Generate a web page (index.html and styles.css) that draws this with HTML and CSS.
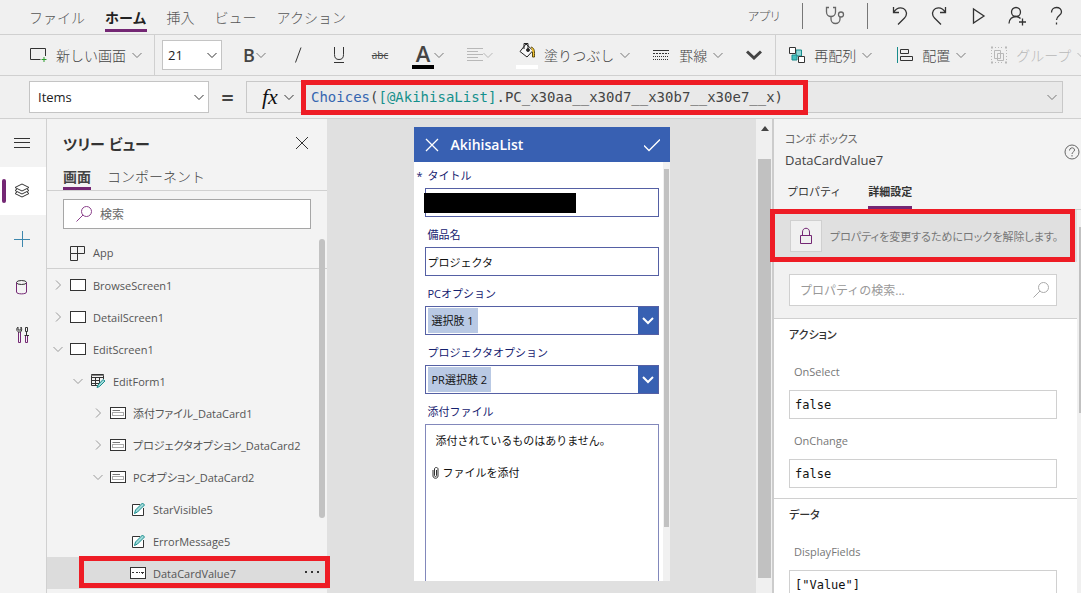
FILE: index.html
```html
<!DOCTYPE html>
<html lang="ja">
<head>
    <meta charset="UTF-8">
    <meta name="viewport" content="width=device-width, initial-scale=1.0">
    <title>Power Apps Studio</title>
    <link rel="stylesheet" href="styles.css">
</head>
<body>
    <!-- shared icons -->
    <svg class="sprite" aria-hidden="true">
        <symbol id="chev-down" viewBox="0 0 10 10"><path d="M.5 3 5 7.500 9.500 3"/></symbol>
        <symbol id="chev-right" viewBox="0 0 10 10"><path d="M3 .5 7.500 5 3 9.500"/></symbol>
        <symbol id="close" viewBox="0 0 14 14"><path d="M1 1 13 13M13 1 1 13"/></symbol>
        <symbol id="search" viewBox="0 0 16 16"><circle cx="10.500" cy="5.500" r="5"/><path d="M7 9 .5 15.500"/></symbol>
        <symbol id="screen" viewBox="0 0 16 12"><rect x=".5" y=".5" width="15" height="11" fill="#fff"/></symbol>
        <symbol id="card" viewBox="0 0 16 12"><rect x=".5" y=".5" width="15" height="11" fill="#fff"/><path d="M2.500 3.500H10" stroke="#777"/><rect x="2.500" y="5.500" width="11" height="3" stroke="#aaa"/></symbol>
        <symbol id="label-edit" viewBox="0 0 16 14"><path d="M13.500 6V13.500H2.500V2.500H10" fill="#fff"/><path d="M4.500 11.500 5.500 8 12.500 1 14.500 3 7.500 10Z" fill="#9fdada" stroke="#188c8c"/></symbol>
    </svg>

    <header>
        <div class="menu-bar">
            <nav class="menu">
                <a href="#">ファイル</a>
                <a href="#" class="active">ホーム</a>
                <a href="#">挿入</a>
                <a href="#">ビュー</a>
                <a href="#">アクション</a>
            </nav>
            <div class="app-actions">
                <a href="#" class="app-link">アプリ</a>
                <span class="divider"></span>
                <button aria-label="アプリ チェック"><svg class="icon-20 soft" viewBox="0 0 20 20"><path d="M4 1.500H1.500V6a4.500 4.500 0 0 0 9 0V1.500H8M6 10.500V13a4.500 4.500 0 0 0 9 0V11"/><circle cx="16" cy="8.500" r="2.500"/></svg></button>
                <span class="divider"></span>
                <button aria-label="元に戻す"><svg class="icon-20" viewBox="0 0 20 20"><path d="M3.500 1V6.500H9M3.500 6.500C7 1 11 1.500 13.500 2.500 17 4.500 17.500 9 14.500 12L8 18.500"/></svg></button>
                <button aria-label="やり直し"><svg class="icon-20" viewBox="0 0 20 20"><path d="M16.500 1V6.500H11M16.500 6.500C13 1 9 1.500 6.500 2.500 3 4.500 2.500 9 5.500 12L12 18.500"/></svg></button>
                <button aria-label="プレビュー"><svg class="icon-20" viewBox="0 0 20 20"><path d="M5.500 3V17L16 10Z"/></svg></button>
                <button aria-label="共有"><svg class="icon-20" viewBox="0 0 20 20"><circle cx="9" cy="6" r="4.500"/><path d="M2 17.500C2 13 5.500 10.500 9 10.500 11 10.500 12.500 11.500 13.500 12.500M12 16H19M15.500 12.500V19.500"/></svg></button>
                <button aria-label="ヘルプ"><svg class="icon-20" viewBox="0 0 20 20"><path d="M5.500 6.500C5.500 3.500 7.500 1.500 10.500 1.500S15.500 3.500 15.500 6C15.500 9.500 10.500 9.500 10.500 14M10.500 16.500V18.500"/></svg></button>
            </div>
        </div>

        <div class="ribbon">
            <button class="new-screen">
                <svg class="icon-18" viewBox="0 0 18 18"><path d="M10.500 13.500H.5V2.500H15.500V10"/><path d="M14 11V16M11.500 13.500H16.500" stroke="#2a9d2a"/></svg>
                <span>新しい画面</span>
                <svg class="chev"><use href="#chev-down"/></svg>
            </button>
            <span class="select size-select">
                <select aria-label="フォント サイズ"><option>21</option></select>
                <svg class="chev dark"><use href="#chev-down"/></svg>
            </span>
            <div class="formatting">
                <button aria-label="太字"><span class="bold-glyph">B</span><svg class="chev"><use href="#chev-down"/></svg></button>
                <button class="glyph" aria-label="斜体"><svg class="icon-18" viewBox="0 0 18 18"><path d="M12 1.500 6.500 16.500"/></svg></button>
                <button class="glyph" aria-label="下線"><svg class="icon-18" viewBox="0 0 18 18"><path d="M4.500 1V8.500C4.500 12 6 13.500 9 13.500S13.500 12 13.500 8.500V1M4 16.500H14"/></svg></button>
                <button class="glyph strike">abc</button>
                <button class="color-button" aria-label="フォントの色"><span class="font-color">A</span><svg class="chev"><use href="#chev-down"/></svg></button>
                <button class="disabled" aria-label="テキストの整列"><svg class="icon-16" viewBox="0 0 16 16"><path d="M0 1.500H16M0 4.500H11M0 7.500H16M0 10.500H11M0 13.500H16"/></svg><svg class="chev"><use href="#chev-down"/></svg></button>
                <button class="fill-button">
                    <span class="fill-color"><svg class="icon-18" viewBox="0 0 18 18"><path d="M8 2 15 8.500 9 15 2 9.500ZM6 7V1.500H10V8" fill="#f8f8f8" stroke="#222"/><path d="M13 5C17 6 16.500 10 16.500 15H14.500V10" fill="#f4c430" stroke="#5a4a10"/><circle cx="10" cy="8" r="1.500" fill="#222"/></svg></span>
                    <span>塗りつぶし</span>
                    <svg class="chev"><use href="#chev-down"/></svg>
                </button>
                <button class="border-button">
                    <svg class="icon-16" viewBox="0 0 16 16"><path d="M0 3.500H16"/><path d="M0 6.500H16" stroke-dasharray="2 1"/><path d="M0 9.500H16M0 12.500H16" stroke-dasharray="1 1"/></svg>
                    <span>罫線</span>
                    <svg class="chev"><use href="#chev-down"/></svg>
                </button>
                <button aria-label="その他"><svg class="more" viewBox="0 0 16 10"><path d="M1 1.500 8 8 15 1.500"/></svg></button>
            </div>
            <div class="arrange">
                <button>
                    <svg class="icon-18" viewBox="0 0 18 18"><path d="M8 4H13.500V10H8Z" fill="#8ed8d8" stroke="#188c8c"/><path d="M4 9H9V14H4Z" fill="#43c0c0" stroke="#188c8c"/><path d="M1.500 1.500H7.500V7.500H1.500ZM10.500 10.500H16.500V16.500H10.500Z" fill="#fff"/></svg>
                    <span>再配列</span>
                    <svg class="chev"><use href="#chev-down"/></svg>
                </button>
                <button>
                    <svg class="icon-18" viewBox="0 0 18 18"><path d="M1.500 1V17" stroke="#188c8c"/><path d="M4.500 3.500H12.500V7.500H4.500ZM4.500 10.500H16.500V14.500H4.500Z"/></svg>
                    <span>配置</span>
                    <svg class="chev"><use href="#chev-down"/></svg>
                </button>
                <button class="disabled">
                    <svg class="icon-18" viewBox="0 0 18 18"><path d="M4.500 4.500H10.500V12.500H4.500ZM7.500 7.500H13.500V14.500H7.500Z"/><path d="M1 1.500H3M15 1.500H17M1 16.500H3M15 16.500H17" stroke-width="2"/><path d="M1.500 4V14M16.500 4V14M5 1.500H13M5 16.500H13" stroke-dasharray="1 2"/></svg>
                    <span>グループ</span>
                    <svg class="chev"><use href="#chev-down"/></svg>
                </button>
            </div>
        </div>

        <div class="formula-bar">
            <span class="select property-select">
                <select aria-label="プロパティ"><option>Items</option></select>
                <svg class="chev dark"><use href="#chev-down"/></svg>
            </span>
            <span class="equals">=</span>
            <div class="formula">
                <button class="fx"><span>fx</span><svg class="chev dark"><use href="#chev-down"/></svg></button>
                <div class="formula-input">
                    <code role="textbox" aria-label="数式" contenteditable="true" spellcheck="false"><span class="fn">Choices</span>(<span class="ref">[@AkihisaList]</span>.PC_x30aa__x30d7__x30b7__x30e7__x)</code>
                    <button aria-label="数式バーを展開"><svg class="chev"><use href="#chev-down"/></svg></button>
                    <span class="marker marker-formula"></span>
                </div>
            </div>
        </div>
    </header>

    <main>
        <nav class="rail">
            <button aria-label="メニュー"><svg class="icon-18" viewBox="0 0 18 18"><path d="M1 4.500H17M1 8.500H17M1 13.500H17"/></svg></button>
            <button class="active" aria-label="ツリー ビュー"><svg class="icon-18" viewBox="0 0 18 18"><path d="M9 2 16 5.500 9 9 2 5.500ZM4 7 2 8.500 9 12 16 8.500 14 7M4 10 2 11.500 9 15 16 11.500 14 10"/></svg></button>
            <button class="insert" aria-label="挿入"><svg class="icon-18" viewBox="0 0 18 18"><path d="M9.500 1V17M1 9.500H17"/></svg></button>
            <button aria-label="データ"><svg class="icon-18" viewBox="0 0 18 18"><ellipse cx="8.500" cy="4.500" rx="5" ry="2"/><path d="M3.500 4.500V14C3.500 16.500 13.500 16.500 13.500 14V4.500" stroke="#742774"/></svg></button>
            <button aria-label="高度なツール"><svg class="icon-18" viewBox="0 0 18 18"><path d="M5.500 6V16.500H7.500V6M12.500 10V16.500H14.500V10" stroke="#742774"/><path d="M5 1C3 2.500 3.500 5 5.500 6H7.500C9 5 9 2.500 8 1V4H5ZM12.500 1.500H14.500V5.500H12.500ZM13.500 6V9M11.500 9.500H16"/></svg></button>
        </nav>

        <aside class="tree">
            <div class="tree-title">
                <h2>ツリー ビュー</h2>
                <button aria-label="閉じる"><svg class="icon-14"><use href="#close"/></svg></button>
            </div>
            <div class="tree-tabs">
                <a href="#" class="active">画面</a>
                <a href="#">コンポーネント</a>
            </div>
            <label class="tree-search">
                <svg class="icon-16"><use href="#search"/></svg>
                <input type="text" placeholder="検索" aria-label="検索">
            </label>
            <ul class="tree-list">
                <li class="app"><svg class="icon-16" viewBox="0 0 16 16"><path d="M.5 1.500H14.500V8.500H.5ZM.5 8.500V15.500H7.500V1.500"/></svg>App</li>
                <li><svg class="chev"><use href="#chev-right"/></svg><svg class="type"><use href="#screen"/></svg>BrowseScreen1</li>
                <li><svg class="chev"><use href="#chev-right"/></svg><svg class="type"><use href="#screen"/></svg>DetailScreen1</li>
                <li><svg class="chev"><use href="#chev-down"/></svg><svg class="type"><use href="#screen"/></svg>EditScreen1</li>
                <li class="level-1"><svg class="chev"><use href="#chev-down"/></svg><svg class="icon-16" viewBox="0 0 16 16"><path d="M9 12.500H1.500V1.500H13.500V6M1.500 4.500H13.500M1.500 7.500H10M1.500 10.500H9M5.500 4V12M9.500 4V10"/><path d="M1.500 2.500H13.500" stroke="#888"/><path d="M7 14.500 8 12 13 6.500 15 8 9.500 13.500Z" fill="#9fdada" stroke="#188c8c"/></svg>EditForm1</li>
                <li class="level-2"><svg class="chev"><use href="#chev-right"/></svg><svg class="type"><use href="#card"/></svg>添付ファイル_DataCard1</li>
                <li class="level-2"><svg class="chev"><use href="#chev-right"/></svg><svg class="type"><use href="#card"/></svg>プロジェクタオプション_DataCard2</li>
                <li class="level-2"><svg class="chev"><use href="#chev-down"/></svg><svg class="type"><use href="#card"/></svg>PCオプション_DataCard2</li>
                <li class="level-3"><svg class="edit"><use href="#label-edit"/></svg>StarVisible5</li>
                <li class="level-3"><svg class="edit"><use href="#label-edit"/></svg>ErrorMessage5</li>
                <li class="level-3 selected"><svg class="type" viewBox="0 0 16 12"><rect x=".5" y=".5" width="15" height="11" fill="#fff"/><path d="M2 5.500H4M6 5.500H8M9 5.500H10M11 5.500H14M12.500 5V7"/></svg>DataCardValue7<button aria-label="その他の操作"><svg class="icon-16" viewBox="0 0 16 16"><path d="M1 7H3M7 7H9M13 7H15" stroke-width="2"/></svg></button><span class="marker marker-tree"></span></li>
            </ul>
            <span class="tree-scroll"></span>
        </aside>

        <section class="canvas">
            <form class="phone">
                <div class="phone-header">
                    <button type="button" aria-label="キャンセル"><svg class="icon-14"><use href="#close"/></svg></button>
                    <h1>AkihisaList</h1>
                    <button type="button" aria-label="保存"><svg class="icon-16" viewBox="0 0 16 16"><path d="M0 8.500 5 13.500 16 2.500"/></svg></button>
                </div>
                <div class="phone-body">
                    <div class="phone-fields">
                        <label class="required" for="title">タイトル</label>
                        <div class="field"><input id="title" type="text"><span class="redacted"></span></div>
                        <label for="item-name">備品名</label>
                        <div class="field"><input id="item-name" type="text" value="プロジェクタ"></div>
                        <label for="pc-option">PCオプション</label>
                        <div class="field combo"><span class="tag">選択肢 1</span><button id="pc-option" type="button"><svg class="combo-chev" viewBox="0 0 12 8"><path d="M1 1 6 6 11 1"/></svg></button></div>
                        <label for="pr-option">プロジェクタオプション</label>
                        <div class="field combo"><span class="tag">PR選択肢 2</span><button id="pr-option" type="button"><svg class="combo-chev" viewBox="0 0 12 8"><path d="M1 1 6 6 11 1"/></svg></button></div>
                        <label for="attach">添付ファイル</label>
                        <div class="attachments">
                            <p>添付されているものはありません。</p>
                            <button id="attach" type="button"><svg class="clip" viewBox="0 0 7 12"><path d="M1 3V9C1 12 6 12 6 9V2C6 0 2.500 0 2.500 2V8.500C2.500 10 4.500 10 4.500 8.500V3"/></svg>ファイルを添付</button>
                        </div>
                    </div>
                    <div class="phone-scroll"><span></span></div>
                </div>
            </form>
            <div class="canvas-scroll"><i></i><span></span></div>
        </section>

        <aside class="properties">
            <div class="prop-header">
                <div>
                    <p class="control-type">コンボ ボックス</p>
                    <p class="control-name">DataCardValue7</p>
                </div>
                <button aria-label="ヘルプ"><svg class="icon-16" viewBox="0 0 16 16"><circle cx="8" cy="8" r="7"/><path d="M5.500 6.500C5.500 3 10.500 3 10.500 6 10.500 8 8 8 8 10M8 11V12.500"/></svg></button>
            </div>
            <div class="prop-tabs">
                <a href="#">プロパティ</a>
                <a href="#" class="active">詳細設定</a>
            </div>
            <div class="prop-body">
                <div class="prop-content">
                    <div class="lock-row">
                        <button aria-label="ロックを解除"><svg class="icon-18" viewBox="0 0 18 18"><path d="M3.500 8.500H14.500V16.500H3.500ZM5.500 8.500V5C5.500 0 12.500 0 12.500 5V8.500"/></svg></button>
                        <span>プロパティを変更するためにロックを解除します。</span>
                        <span class="marker marker-lock"></span>
                    </div>
                    <div class="prop-search-row">
                        <label class="prop-search">
                            <input type="text" placeholder="プロパティの検索..." aria-label="プロパティの検索">
                            <svg class="icon-16"><use href="#search"/></svg>
                        </label>
                    </div>
                    <section class="prop-group">
                        <h3>アクション</h3>
                        <label for="on-select">OnSelect</label>
                        <input id="on-select" type="text" value="false">
                        <label for="on-change">OnChange</label>
                        <input id="on-change" type="text" value="false">
                    </section>
                    <section class="prop-group">
                        <h3>データ</h3>
                        <label for="display-fields">DisplayFields</label>
                        <input id="display-fields" type="text" value='["Value"]'>
                    </section>
                </div>
                <div class="prop-scroll"><span></span></div>
            </div>
        </aside>
    </main>
</body>
</html>
```

FILE: styles.css
```css
* {
    box-sizing: border-box;
}
body {
    margin: 0;
    height: 100vh;
    display: flex;
    flex-direction: column;
    overflow: hidden;
    background-color: #f0f0f0;
    color: #444;
    font-family: "Open Sans", "Noto Sans CJK JP", sans-serif;
    font-size: 14px;
}
h1, h2, h3, p, ul {
    margin: 0;
    padding: 0;
}
a {
    color: inherit;
    text-decoration: none;
}
button, input, select {
    font: inherit;
    color: inherit;
    padding: 0;
    margin: 0;
    border: none;
    background: none;
    outline: none;
}
button {
    display: flex;
    align-items: center;
    flex-shrink: 0;
    white-space: nowrap;
}
svg {
    display: block;
    flex-shrink: 0;
    fill: none;
    stroke: #333;
}
.sprite {
    position: absolute;
    width: 0;
    height: 0;
}
.icon-14 { width: 14px; height: 14px; }
.icon-16 { width: 16px; height: 16px; }
.icon-18 { width: 18px; height: 18px; }
.icon-20 { width: 20px; height: 20px; stroke-width: 1.3; }
.soft { stroke: #666; }
.chev {
    width: 10px;
    height: 10px;
    stroke: #777;
}
.chev.dark { stroke: #333; }
.disabled { color: #b8b8b8; }
.disabled svg { stroke: #b8b8b8; }

/* red frames drawn over the page */
.marker {
    position: absolute;
    border: 5px solid #ee1c25;
    pointer-events: none;
    z-index: 5;
}

/* menu */
header {
    flex-shrink: 0;
    border-bottom: 1px solid #d0d0d0;
}
.menu-bar {
    display: flex;
    justify-content: space-between;
    height: 35px;
    padding: 0 15px 0 29px;
    border-bottom: 1px solid #d0d0d0;
}
.menu {
    display: flex;
    align-items: flex-start;
    gap: 20px;
    color: #555;
    font-weight: 300;
}
.menu a {
    height: 32px;
    line-height: 36px;
    border-bottom: 3px solid transparent;
}
.menu a.active {
    color: #222;
    font-weight: bold;
    border-color: #742774;
}
.app-actions {
    display: flex;
    align-items: center;
    gap: 19px;
    height: 32px;
}
.app-link {
    color: #555;
    font-size: 12px;
    font-weight: 300;
    font-feature-settings: "palt";
}
.divider {
    width: 1px;
    height: 26px;
    margin: 0 3px;
    background-color: #777;
}

/* ribbon */
.ribbon {
    display: flex;
    align-items: center;
    height: 41px;
    border-bottom: 1px solid #d0d0d0;
    overflow: hidden;
    font-weight: 300;
}
.new-screen {
    height: 100%;
    gap: 6px;
    padding: 0 12px 0 30px;
    border-right: 1px solid #d0d0d0;
}
.new-screen span { padding-left: 2px; }
.select {
    display: grid;
    align-items: center;
    background-color: #fff;
    border: 1px solid #c4c4c4;
    font-size: 13px;
    font-weight: 400;
}
.select select, .select svg { grid-area: 1 / 1; }
.select select {
    width: 100%;
    height: 100%;
    padding-left: 5px;
    appearance: none;
    color: #222;
}
.select svg {
    justify-self: end;
    margin-right: 4px;
    pointer-events: none;
}
.size-select {
    width: 60px;
    height: 30px;
    margin: 0 20px 0 7px;
    flex-shrink: 0;
}
.formatting {
    display: flex;
    align-items: center;
    gap: 23px;
    height: 100%;
    padding-right: 13px;
    border-right: 1px solid #d0d0d0;
}
.bold-glyph {
    width: 14px;
    font-size: 18px;
    font-weight: 600;
}
.glyph {
    width: 18px;
    justify-content: center;
}
.strike {
    font-size: 10px;
    font-weight: 400;
    text-decoration: line-through;
}
.font-color, .fill-color {
    display: flex;
    justify-content: center;
    width: 22px;
    height: 27px;
    border-bottom: 4px solid #000;
    font-size: 22px;
    font-weight: 600;
    line-height: 22px;
}
.fill-color { border-color: #fff; }
.fill-button span + span { padding-left: 6px; }
.fill-button .chev { margin-left: 6px; }
.border-button span { padding: 0 6px 0 10px; }
.more {
    width: 16px;
    height: 10px;
    stroke: #444;
    stroke-width: 3;
}
.arrange {
    display: flex;
    gap: 24px;
    padding-left: 12px;
}
.arrange button { gap: 6px; }
.arrange span { padding-left: 2px; }

/* formula bar */
.formula-bar {
    display: flex;
    align-items: center;
    height: 42px;
    padding: 0 18px 0 29px;
}
.property-select {
    width: 180px;
    height: 32px;
    flex-shrink: 0;
}
.property-select select { padding-left: 8px; }
.equals {
    width: 37px;
    text-align: center;
    font-size: 22px;
    font-weight: 600;
}
.formula {
    display: flex;
    flex: 1;
    height: 32px;
    border: 1px solid #c8c8c8;
}
.fx {
    gap: 6px;
    width: 56px;
    padding-left: 15px;
    color: #111;
    font-family: "Liberation Serif", serif;
    font-size: 22px;
    font-style: italic;
}
.formula-input {
    position: relative;
    display: flex;
    flex: 1;
    align-items: center;
    justify-content: space-between;
    padding: 0 5px 0 8px;
    background-color: #e9e9e9;
}
.formula-input code {
    outline: none;
    font-family: "DejaVu Sans Mono", monospace;
    font-size: 14px;
    white-space: nowrap;
}
.fn { color: #3465b0; }
.ref { color: #15908c; }
.marker-formula {
    left: -2px;
    top: -2px;
    width: 507px;
    height: 35px;
}

/* work area */
main {
    display: flex;
    flex: 1;
    min-height: 0;
}
.rail {
    width: 47px;
    flex-shrink: 0;
    background-color: #f3f3f3;
    border-right: 1px solid #d0d0d0;
}
.rail button {
    width: 100%;
    height: 48px;
    padding-left: 13px;
}
.rail .active {
    position: relative;
    background-color: #fff;
}
.rail .active::before {
    content: "";
    position: absolute;
    left: 2px;
    top: 12px;
    width: 4px;
    height: 24px;
    border-radius: 2px;
    background-color: #742774;
}
.rail .insert svg { stroke: #3d87ad; }

/* tree view */
.tree {
    position: relative;
    width: 280px;
    flex-shrink: 0;
    background-color: #f3f3f3;
}
.tree-title {
    display: flex;
    align-items: center;
    justify-content: space-between;
    height: 48px;
    padding: 0 18px 0 16px;
    color: #333;
}
.tree-title h2 {
    font-size: 15px;
    font-weight: 600;
    font-feature-settings: "palt";
}
.tree-tabs {
    display: flex;
    gap: 16px;
    height: 24px;
    padding-left: 16px;
    border-bottom: 1px solid #d0d0d0;
    line-height: 20px;
}
.tree-tabs a { font-weight: 300; }
.tree-tabs a.active {
    font-weight: bold;
    border-bottom: 3px solid #742774;
}
.tree-search {
    display: flex;
    align-items: center;
    gap: 8px;
    height: 30px;
    margin: 8px 16px 8px;
    padding: 0 12px;
    background-color: #fff;
    border: 1px solid #a6a6a6;
    font-size: 12px;
}
.tree-search svg { stroke: #8a3f8a; }
.tree-search input {
    flex: 1;
    min-width: 0;
}
.tree-search input::placeholder {
    color: #666;
    opacity: 1;
}
.tree-list {
    list-style: none;
    font-size: 11px;
    color: #555;
    font-feature-settings: "palt";
}
.tree-list li {
    display: flex;
    align-items: center;
    height: 32px;
    padding-left: 6px;
    gap: 7px;
    white-space: nowrap;
}
.tree-list li.app {
    padding-left: 23px;
    border-bottom: 1px solid #d0d0d0;
}
.type {
    width: 16px;
    height: 12px;
}
.edit {
    width: 16px;
    height: 14px;
}
.tree-list .chev { stroke: #999; }
.tree-list .level-1 { padding-left: 26px; }
.tree-list .level-2 { padding-left: 46px; }
.tree-list .level-3 { padding-left: 83px; }
.tree-list .selected {
    position: relative;
    padding-right: 7px;
    background-color: #dcdcdc;
}
.tree-list .selected button { margin-left: auto; }
.marker-tree {
    left: 32px;
    right: -3px;
    top: -1px;
    bottom: 1px;
}
.tree-scroll {
    position: absolute;
    top: 120px;
    right: 2px;
    width: 6px;
    height: 279px;
    border-radius: 3px;
    background-color: #c2c2c2;
}

/* canvas */
.canvas {
    display: flex;
    flex: 1;
    min-width: 0;
    justify-content: space-between;
    background-color: #e0e0e0;
}
.phone {
    display: flex;
    flex-direction: column;
    width: 256px;
    margin: 8px auto 12px;
    background-color: #fff;
    font-size: 11px;
}
.phone-header {
    display: flex;
    align-items: center;
    gap: 12px;
    height: 35px;
    padding: 0 10px 0 11px;
    background-color: #3860b2;
    color: #fff;
}
.phone-header svg {
    stroke: #fff;
    stroke-width: 1.3;
}
.phone-header h1 {
    flex: 1;
    font-size: 14px;
    font-weight: 600;
}
.phone-body {
    display: flex;
    flex: 1;
    min-height: 0;
}
.phone-fields {
    display: flex;
    flex-direction: column;
    flex: 1;
    min-width: 0;
    padding: 2px 4px 0 11px;
}
.phone-fields label {
    position: relative;
    height: 24px;
    padding-left: 3px;
    line-height: 24px;
    color: #15216f;
}
.required::before {
    content: "*";
    position: absolute;
    left: -8px;
}
.field {
    position: relative;
    display: flex;
    height: 29px;
    margin-bottom: 6px;
    border: 1px solid #5560a4;
    color: #111;
}
.field input {
    width: 100%;
    padding-left: 2px;
}
.redacted {
    position: absolute;
    left: -2px;
    top: 4px;
    width: 152px;
    height: 20px;
    background-color: #000;
}
.combo { justify-content: space-between; }
.tag {
    margin: 1px 2px;
    padding: 0 4px;
    line-height: 25px;
    background-color: #b9c9e4;
}
.combo button {
    justify-content: center;
    width: 20px;
    background-color: #3860b2;
}
.combo-chev {
    width: 12px;
    height: 8px;
    stroke: #fff;
    stroke-width: 2;
}
.attachments {
    flex: 1;
    padding: 8px 10px;
    border: 1px solid #8288bb;
    border-bottom: none;
    color: #111;
}
.attachments p, .attachments button { line-height: 16px; }
.attachments button {
    gap: 4px;
    margin-top: 16px;
    margin-left: -4px;
}
.clip {
    width: 7px;
    height: 12px;
}
.phone-scroll {
    width: 7px;
    padding: 7px 1px 54px;
    background-color: #f1f1f1;
}
.phone-scroll span {
    display: block;
    height: 100%;
    background-color: #c1c1c1;
}
.canvas-scroll {
    display: flex;
    flex-direction: column;
    align-items: center;
    gap: 28px;
    width: 16px;
    flex-shrink: 0;
    padding: 7px 1px 15px 2px;
    background-color: #f0f0f0;
}
.canvas-scroll i {
    border: 4px solid transparent;
    border-top: none;
    border-bottom: 5px solid #444;
}
.canvas-scroll span {
    flex: 1;
    width: 13px;
    background-color: #c1c1c1;
}

/* properties */
.properties {
    display: flex;
    flex-direction: column;
    width: 309px;
    flex-shrink: 0;
    background-color: #f3f3f3;
    border-left: 2px solid #ccc;
}
.prop-header {
    display: flex;
    align-items: center;
    justify-content: space-between;
    height: 57px;
    padding: 6px 1px 2px 11px;
}
.prop-header button { padding-top: 4px; }
.prop-header svg { stroke: #666; }
.control-type {
    font-size: 11px;
    line-height: 20px;
    color: #666;
    font-feature-settings: "palt";
}
.control-name {
    font-size: 13px;
    line-height: 22px;
}
.prop-tabs {
    display: flex;
    gap: 27px;
    height: 34px;
    padding-left: 13px;
    border-bottom: 1px solid #d0d0d0;
    font-size: 11px;
    line-height: 32px;
    color: #333;
}
.prop-tabs a.active {
    font-weight: bold;
    border-bottom: 3px solid #742774;
}
.prop-body {
    display: flex;
    flex: 1;
    min-height: 0;
}
.prop-content {
    flex: 1;
    min-width: 0;
}
.lock-row {
    position: relative;
    display: flex;
    align-items: center;
    gap: 8px;
    height: 52px;
    padding-left: 16px;
    background-color: #e0e0e0;
    color: #777;
    font-size: 11px;
    white-space: nowrap;
    font-feature-settings: "palt";
}
.lock-row button {
    justify-content: center;
    width: 32px;
    height: 32px;
    background-color: #f0f0f0;
    border: 1px solid #d0d0d0;
}
.lock-row svg { stroke: #742774; }
.marker-lock {
    left: -4px;
    top: -1px;
    right: 2px;
    bottom: 0;
}
.prop-search-row {
    padding: 12px 20px 12px 15px;
    background-color: #f1f1f1;
    border-bottom: 1px solid #d0d0d0;
}
.prop-search {
    display: flex;
    align-items: center;
    height: 32px;
    padding: 0 7px 0 10px;
    background-color: #fff;
    border: 1px solid #d0d0d0;
    font-size: 12px;
}
.prop-search svg { stroke: #aaa; }
.prop-search input {
    flex: 1;
    min-width: 0;
}
.prop-search input::placeholder {
    color: #999;
    opacity: 1;
}
.prop-group {
    display: flex;
    flex-direction: column;
    padding: 6px 20px 10px 15px;
    background-color: #fff;
    border-bottom: 1px solid #d0d0d0;
}
.prop-group h3 {
    margin-bottom: 8px;
    font-size: 11px;
    font-weight: 500;
    line-height: 20px;
    color: #333;
    font-feature-settings: "palt";
}
.prop-group label {
    height: 37px;
    padding-left: 5px;
    font-size: 11px;
    line-height: 38px;
    color: #777;
}
.prop-group input {
    height: 29px;
    padding-left: 5px;
    border: 1px solid #d0d0d0;
    color: #111;
    font-family: "DejaVu Sans Mono", monospace;
    font-size: 12px;
}
.prop-group input + label { margin-top: 3px; }
.prop-scroll {
    width: 4px;
    padding: 17px 0 0 2px;
    background-color: #f0f0f0;
}
.prop-scroll span {
    display: block;
    height: 186px;
    background-color: #c1c1c1;
}
```
